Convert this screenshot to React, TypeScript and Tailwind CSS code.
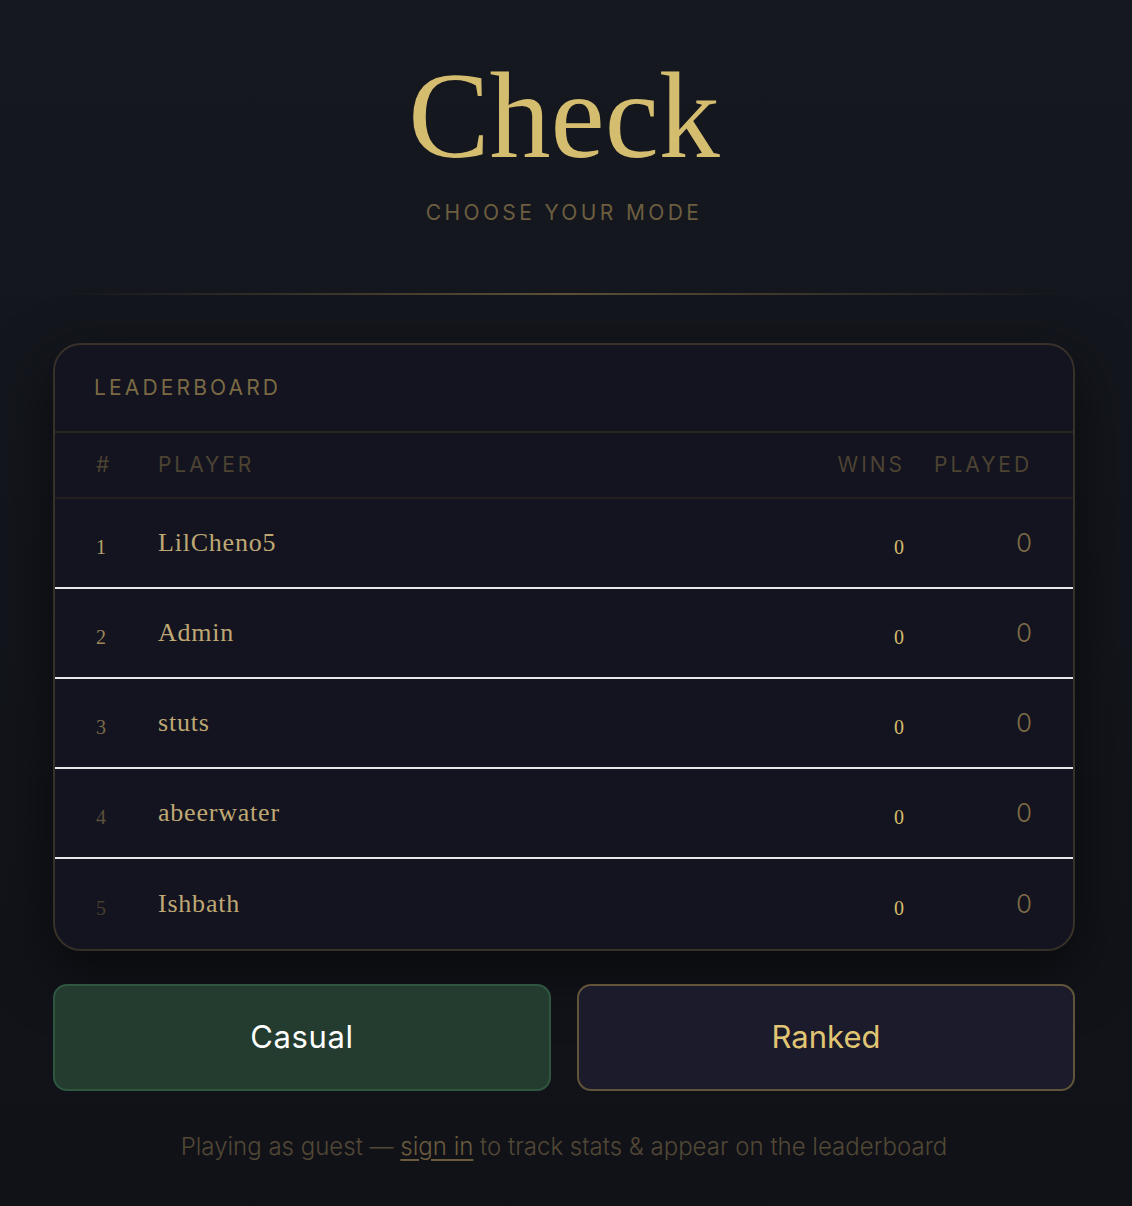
const serif = "font-['Liberation_Serif','DejaVu_Serif',serif]";
const sans = "font-['Inter','Liberation_Sans',sans-serif]";

type Player = { rank: number; name: string; wins: number; played: number };

const PLAYERS: Player[] = [
  { rank: 1, name: "LilCheno5", wins: 0, played: 0 },
  { rank: 2, name: "Admin", wins: 0, played: 0 },
  { rank: 3, name: "stuts", wins: 0, played: 0 },
  { rank: 4, name: "abeerwater", wins: 0, played: 0 },
  { rank: 5, name: "Ishbath", wins: 0, played: 0 },
];

// rank digits fade as you go down the board
const RANK_COLORS = [
  "text-[#b9a26a]",
  "text-[#9c875a]",
  "text-[#7a6a48]",
  "text-[#5c513a]",
  "text-[#463e2f]",
];

function LeaderRow({ p, last }: { p: Player; last: boolean }) {
  return (
    <div
      className={`flex h-[90px] items-center px-[41px] ${
        last ? "" : "border-b-2 border-[#e8e8ea]"
      }`}
    >
      <span className={`${serif} w-[62px] pt-2 text-[20px] ${RANK_COLORS[p.rank - 1]}`}>
        {p.rank}
      </span>
      <span className={`${serif} flex-1 text-[26px] tracking-[0.03em] text-[#bfa874]`}>
        {p.name}
      </span>
      <span className={`${serif} w-[70px] pt-2 pr-px text-right text-[20px] text-[#d6bb6c]`}>
        {p.wins}
      </span>
      <span className={`${sans} w-[127px] text-right text-[26px] font-light text-[#7f6d47]`}>
        {p.played}
      </span>
    </div>
  );
}

export default function App() {
  return (
    <div className="min-h-[1206px] w-full bg-gradient-to-b from-[#161820] via-[#13151c] to-[#111218] pl-[53px]">
      <div className="flex w-[1022px] flex-col items-center pt-[52px]">
        <h1 className={`${serif} text-[122px] leading-[1.05] text-[#d5bd70]`}>Check</h1>
        <p className={`${sans} mt-[17px] text-[21px] tracking-[0.16em] text-[#6c5e3f]`}>
          CHOOSE YOUR MODE
        </p>

        <div className="mt-[64px] h-[2px] w-[1010px] bg-gradient-to-r from-transparent via-[#5e5136] to-transparent" />

        {/* leaderboard card */}
        <div className="mt-[48px] w-full overflow-hidden rounded-[28px] border-2 border-[#37312a] bg-[#13141f] shadow-[0_20px_60px_rgba(0,0,0,0.55)]">
          <div className="flex h-[88px] items-center border-b-2 border-[#2a2620] px-[39px]">
            <span className={`${sans} text-[21px] tracking-[0.15em] text-[#7b6a44]`}>
              LEADERBOARD
            </span>
          </div>
          <div
            className={`${sans} flex h-[66px] items-center border-b-2 border-[#231f1d] px-[41px] text-[21px] tracking-[0.14em] text-[#4c4333]`}
          >
            <span className="w-[62px]">#</span>
            <span className="flex-1">PLAYER</span>
            <span className="w-[70px] text-right">WINS</span>
            <span className="w-[127px] text-right">PLAYED</span>
          </div>
          {PLAYERS.map((p, i) => (
            <LeaderRow key={p.rank} p={p} last={i === PLAYERS.length - 1} />
          ))}
        </div>

        {/* mode buttons */}
        <div className="mt-[33px] grid w-full grid-cols-2 gap-[26px]">
          <button
            className={`${sans} h-[107px] rounded-[14px] border-2 border-[#2f5740] bg-[#243c30] text-[31px] tracking-[0.02em] text-white`}
          >
            Casual
          </button>
          <button
            className={`${sans} h-[107px] rounded-[14px] border-2 border-[#62543a] bg-[#1c1b2c] text-[31px] text-[#e0c673]`}
          >
            Ranked
          </button>
        </div>

        <p className={`${sans} mt-[38px] text-[24px] font-light text-[#514835]`}>
          Playing as guest —{" "}
          <a className="text-[#6a5b3d] underline underline-offset-4">sign in</a> to track
          stats &amp; appear on the leaderboard
        </p>
      </div>
    </div>
  );
}
